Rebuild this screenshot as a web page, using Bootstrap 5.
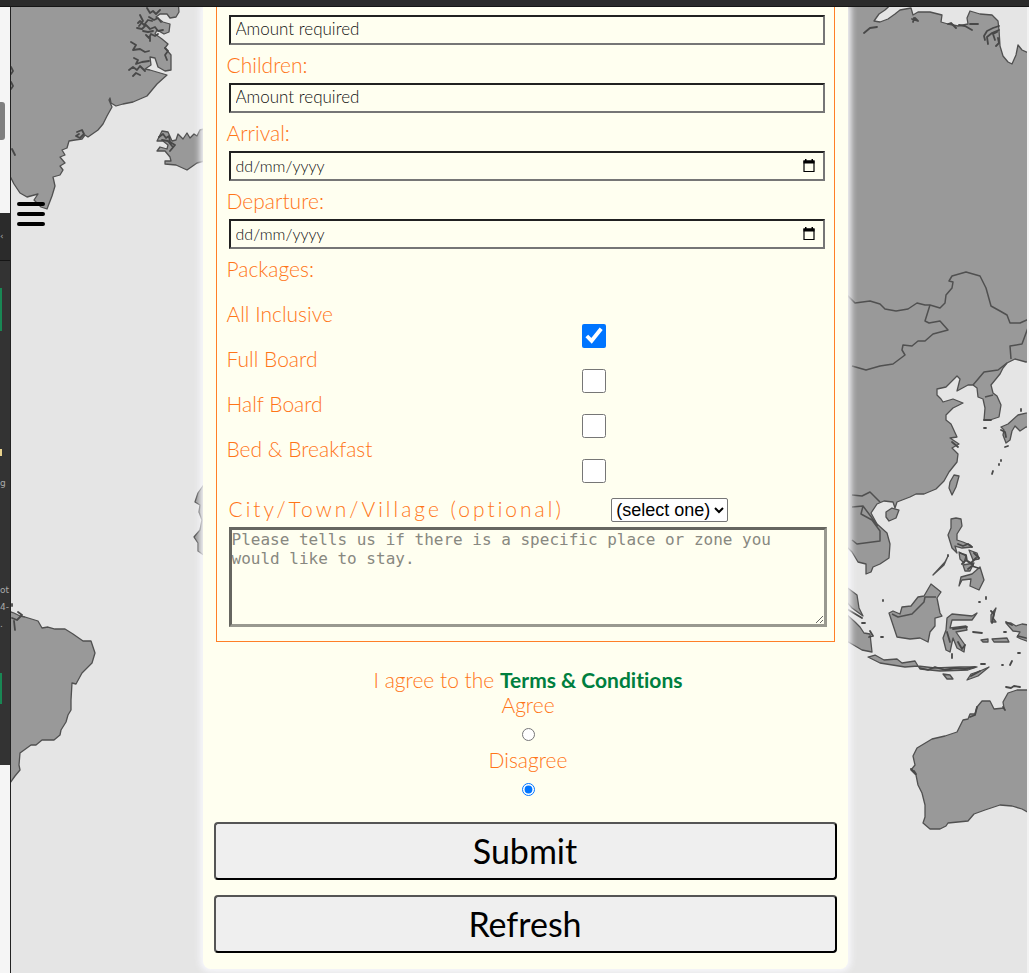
<!DOCTYPE html>
<html lang="en-GB">
<head>
<meta charset="utf-8">
<meta name="viewport" content="width=device-width, initial-scale=1">
<title>Booking request</title>
<link href="https://cdn.jsdelivr.net/npm/bootstrap@5.3.0/dist/css/bootstrap.min.css" rel="stylesheet">
<style>
  body { font-family: Lato, "Open Sans", sans-serif; font-weight: 300; font-size: 21px; line-height: 25px; font-variant-ligatures: none; color: #ff7518; background: #e5e5e5; }
  .top-strip { height: 7px; background: #2b2b2b; border-bottom: 1px solid #151515; }
  .edge { width: 11px; background: #f5f5f5; border-right: 1px solid #222; font: 9px/17px "DejaVu Sans", sans-serif; color: #aaa; }
  .edge-gap { height: 206px; }
  .edge-mark { width: 5px; height: 38px; margin-top: 95px; background: #808080; border-radius: 0 3px 3px 0; }
  .edge-panel { height: 552px; background: #333; }
  .edge-head { height: 48px; padding-top: 15px; background: #2b2b2b; border-bottom: 1px solid #151515; }
  .edge-green { width: 2px; height: 43px; margin-top: 27px; background: #198754; }
  .edge-sand { width: 2px; height: 7px; margin: 118px 0 19px; background: #e8d28c; }
  .edge-line { height: 17px; white-space: nowrap; }
  .edge-group { margin-top: 90px; }
  .edge-low { width: 2px; height: 31px; margin-top: 40px; background: #198754; }
  .stage { min-width: 0; border-right: 2px solid #f2f2f2; padding: 0 16px 4px 28px; }
  .world { position: absolute; inset: 0; width: 100%; height: 100%; }
  .menu-btn { position: absolute; left: 6px; top: 194px; width: 28px; height: 26px; }
  .sheet { width: 67%; max-width: 645px; padding: 0 11px 16px; background: #fffff0; border-radius: 0 0 8px 8px; box-shadow: 0 0 6px 3px #f8f8fc; }
  .details { margin: 0 2px; padding: 8px 7px 14px 10px; border: 1px solid #ff7f27; border-top: 0; }
  .caption { display: block; margin: 7px 0 6px; }
  .field { display: block; width: calc(100% - 4px); height: 30px; margin-left: 2px; padding: 0 5px 3px; border: 2px inset #767676; border-color: #212121 #767676 #767676 #212121; border-style: solid; background: transparent; font-size: 17px; font-weight: 300; color: #111; }
  .field::placeholder { color: #111; opacity: 1; }
  .date-field { padding-bottom: 1px; font-size: 16px; }
  .cal { position: absolute; right: 12px; top: 8px; width: 12px; height: 14px; }
  .tick { display: block; width: 24px; height: 24px; margin: -2px auto; accent-color: #0075ff; }
  .packs-title { margin-top: 7px; }
  .pack-list { margin-top: 20px; }
  .tick-cell { padding-left: 134px; }
  .place-row { margin: 17px 0 5px 2px; height: 24px; }
  .place-label { width: 64%; padding-bottom: 3px; letter-spacing: 3px; }
  .place-select { width: 117px; height: 24px; font: 18px/20px "Liberation Sans", sans-serif; color: #000; background: #fff; border: 1px solid #767676; border-radius: 2px; }
  .notes { display: block; width: calc(100% - 2px); height: 100px; margin-left: 2px; padding: 0; border: 3px solid; border-color: #666660 #999990 #999990 #666660; background: transparent; font: 16px/19px "DejaVu Sans Mono", monospace; color: #555; resize: vertical; }
  .notes::placeholder { color: #888880; opacity: 1; }
  .agree { margin-top: 25px; padding-left: 6px; }
  .agree a { color: #007f3f; font-weight: 700; }
  .pick { display: block; width: 13px; height: 13px; margin: 11px auto 6px; accent-color: #0075ff; }
  .actions { padding-top: 20px; gap: 15px; }
  .big-btn { display: block; width: 100%; height: 58px; background: #efefef; border: 2px solid; border-color: #555 #000 #000 #555; border-radius: 4px; font-size: 34px; line-height: 40px; font-weight: 400; color: #000; }
</style>
</head>
<body>
<div class="d-flex flex-column min-vh-100">
  <div class="top-strip"></div>
  <div class="d-flex flex-grow-1">
    <aside class="edge flex-shrink-0 overflow-hidden d-flex flex-column">
      <div class="edge-gap overflow-hidden"><div class="edge-mark"></div></div>
      <div class="edge-panel">
        <div class="edge-head"><div class="edge-line">‹</div></div>
        <div class="edge-green"></div>
        <div class="edge-sand"></div>
        <div class="edge-line">g</div>
        <div class="edge-group">
          <div class="edge-line">ot</div>
          <div class="edge-line">4-</div>
          <div class="edge-line">.</div>
        </div>
        <div class="edge-low"></div>
      </div>
    </aside>
    <main class="stage flex-grow-1 position-relative overflow-hidden">
      <svg class="world" viewBox="11 7 1016 966" preserveAspectRatio="xMidYMin slice" aria-hidden="true">
        <g fill="#999" stroke="#505050" stroke-width="1.3" stroke-linejoin="round">
          <!-- Greenland and Iceland -->
          <path d="M5 0H178L179 12 176 17 170 18 167 14 160 14 156 17 163 22 170 24 169 32 164 34 157 30 155 34 162 39 168 44 165 48 171 55 171 70 165 71 158 67 155 58 150 57 151 65 145 69 150 70 167 75 157 84 147 96 133 102 123 104 116 106 111 103 110 98 109 100 112 107 107 116 103 124 98 130 88 137 85 135 82 139 75 140 69 141 67 148 62 150 65 155 60 157 65 163 60 166 63 170 60 175 53 177 55 186 52 196 47 209 41 207 34 200 38 194 27 197 20 193 14 184 11 178 5 170Z"/>
          <path d="M157 141L162 131 168 132 172 141 176 140 178 134 183 139 187 133 190 138 194 134 197 136 200 130 208 128V160L197 163 187 170 176 165 165 164 165 161 171 161 170 157 165 151 157 151 160 147 167 149 168 145 163 141Z"/>
          <!-- West Africa -->
          <path d="M205 483L198 493 195 502 200 505 199 512 202 520 200 530 194 537 198 543 198 551 205 556Z"/>
          <!-- South America -->
          <path d="M5 610L14 613 20 616 25 617 38 621 42 628 48 627 55 629 65 629 73 634 83 641 91 641 95 653 92 663 82 673 76 684 72 683 71 700 71 710 68 715 66 722 61 730 60 735 54 740 42 740 36 745 31 745 20 753 19 765 20 770 15 776 5 790Z"/>
          <!-- Asia -->
          <path d="M845 0H896L885 10 879 14 874 21 880 22 888 19 895 14 900 10 911 8 913 15 918 12 930 12 942 15 941 22 948 24 958 26 968 24 967 18 970 11 980 14 992 15 998 21 999 30 1000 46 1003 56 1008 62 1012 64 1016 55 1018 45 1022 50 1035 56V360L1026 362 1015 359 1007 363 1003 368 1000 374 991 385 993 393 997 396 1001 405 999 417 990 420 984 420 985 408 983 399 978 397 977 388 973 385 968 385 957 391 960 379 957 376 946 387 937 389 937 395 941 399 943 402 953 399 963 403 953 408 946 415 946 420 951 424 957 437 950 438 959 444 952 448 958 454 957 462 949 472 944 481 936 489 924 494 916 494 910 497 897 502 895 508 893 502 884 501 877 504 871 513 877 524 887 533 890 544 889 558 880 564 873 567 871 572 866 574 866 564 858 562 852 552 845 545Z"/>
          <!-- Japan, Taiwan, Hainan -->
          <path d="M1001 427L1008 424 1018 415 1035 411V428L1026 427 1020 431 1015 426 1012 431 1010 440 1006 443 1003 435 1004 430Z"/>
          <path d="M950 482L954 475 959 476 956 487 952 495 949 488ZM886 512L892 508 899 510 896 518 889 521 886 517Z"/>
          <!-- Philippines -->
          <path d="M951 519L956 518 961 519 962 526 957 534 957 540 963 542 970 545 972 547 962 548 955 546 957 553 952 548 948 535 951 528ZM933 575L945 562 948 556 944 565ZM959 552L966 556 964 563 960 559ZM969 550L977 553 979 559 973 560ZM963 565L974 563 970 571 965 571ZM980 567L984 580 979 590 970 586 971 579 962 580 959 586 961 577 972 574Z"/>
          <!-- Borneo, Sulawesi, Sumatra, Java -->
          <path d="M889 613L893 611 900 614 902 607 911 606 918 597 924 596 931 584 941 592 937 598 940 613 942 616 935 618 935 626 930 632 928 642 920 638 910 639 897 637 892 622Z"/>
          <path d="M947 618L952 614 972 616 977 613 972 620 952 620 950 628 966 626 967 630 956 632 965 645 964 652 957 648 953 638 950 652 946 650 943 638 946 630Z"/>
          <path d="M845 586L857 595 859 608 863 616 852 608 845 600ZM845 613L855 622 860 627 864 633 870 634 872 652 862 650 845 640ZM868 657L875 655 884 660 897 659 902 663 915 661 918 666 905 667 880 663ZM918 666L935 668 960 667 977 667 968 670 940 671 920 669ZM967 680L971 674 980 671 989 667 978 676ZM943 674L950 675 953 679 947 679Z"/>
          <path d="M992 639L1007 638 1009 642 994 642ZM981 640L988 639 988 642 983 642ZM991 615L996 608 993 618 996 622 991 622ZM1006 623L1011 623 1016 626 1022 624 1035 626V644L1021 639 1017 637 1020 632 1013 631Z"/>
          <!-- Australia -->
          <path d="M1035 690L1022 690 1017 690 1008 693 1003 702 1004 708 994 709 990 701 982 701 977 707 975 714 970 714 968 719 963 720 957 732 945 736 932 739 917 748 913 756 915 765 911 770 916 775 918 785 922 793 925 805 925 817 923 823 930 829 940 829 946 826 948 823 968 821 974 814 985 810 1000 805 1012 806 1022 809 1035 816Z"/>
        </g>
        <!-- Country borders -->
        <g fill="none" stroke="#505050" stroke-width="1.5" stroke-linejoin="round">
          <path d="M845 293L855 303 870 301 880 304 885 309 896 311 908 309 917 303 925 305 930 305 940 308 945 303 946 295 952 288 953 282 949 281 952 276 966 272 980 276 986 288 991 306 1000 311 1007 315 1010 323 1020 323 1029 319"/>
          <path d="M930 305L925 321 929 323 940 321 948 330 933 334 925 341 918 341 912 346 903 345 902 350 905 355 893 364 880 366 866 370 852 366M1029 325L1022 344 1010 346 1011 359M1007 363L998 370 984 372 973 385M985 397L993 395"/>
          <path d="M852 495L862 496 870 492 880 502M852 507L863 506 861 514 872 520 880 531 880 541 857 544 852 540M863 506L878 526M892 614L898 617 912 614 924 602 925 597 936 597"/>
        </g>
        <!-- Fjords and small islands -->
        <g fill="none" stroke="#484848" stroke-width="1.8" stroke-linecap="round" stroke-linejoin="round">
          <path d="M147 8L150 13 153 11 156 14 160 10M149 17L154 20 158 18 161 22M138 23L140 21 144 25 148 20 152 21M140 15L143 21 139 26M137 28L142 29 146 25 150 29 155 27 158 31 163 30M146 35L149 38 151 34 155 36 158 34M143 31L148 32 153 31M150 36V41M131 42L136 45 133 50 140 49 145 52 149 51M134 58L138 60 136 64 142 62 149 61M129 70L133 67 137 70 140 66 145 71M133 76L136 73 140 75M165 48L168 51 165 55 167 60M77 132L82 130 84 134 80 138 76 136 79 134M159 137L163 134 166 138 169 136 170 142 175 145 170 151M162 140L168 141 172 146M11 67L13 71 11 74M11 82L13 86 11 89M12 149L15 155M14 621L15 630M12 618L17 620 22 615 18 612M12 604V606"/>
          <path d="M864 33L870 28 877 27M912 19L918 21 915 18M914 18L913 22M948 24L951 23 956 28M959 25L965 26 972 30M970 24L978 24M985 40L984 36 987 31 993 28 999 26M988 44L987 37 992 33 999 30M995 40L993 34 997 32M996 46L999 43 998 38M984 420L991 420M1001 430L1005 432 1006 437M952 442L958 447M1005 447L1008 446M1001 460V461M999 464V465M993 471L992 474M984 428H986M1021 409V411M958 544L963 546 968 544 972 547M960 553L966 555 967 561 973 565M962 564L966 560 971 563 976 558M968 569L972 566 978 568M974 553L979 558M948 555V556M883 600V601M881 637H883M947 632L950 642M953 629L967 627M958 642L962 649 965 645M973 632L982 633M991 611L994 614 992 623M986 597V599M979 602H980M1004 632H1006M920 668L928 670 935 667 945 670 955 668 965 669 975 667M971 676L980 671M981 664H985M1010 665L1012 661M1002 665H1003M1018 653H1020M862 623H865M952 654V658M847 609L862 618M870 631L873 636 869 637M1006 622L1012 625M1018 636L1026 638M1006 687L1011 688 1014 686 1020 687M977 707L975 715 970 717M1003 707L1005 710M911 769L916 774 914 771"/>
        </g>
      </svg>
      <button type="button" class="menu-btn btn p-0 border-0 d-flex" aria-label="Open menu">
        <svg width="28" height="26" viewBox="0 0 28 26"><path d="M2 3H26M2 13H26M2 23H26" stroke="#000" stroke-width="4" stroke-linecap="round"/></svg>
      </button>

      <form class="sheet mx-auto position-relative" onsubmit="return false">
        <fieldset class="details">
          <input class="field" type="text" placeholder="Amount required" aria-label="Adults">
          <label class="caption" for="children">Children:</label>
          <input class="field" id="children" type="text" placeholder="Amount required">
          <label class="caption" for="arrival">Arrival:</label>
          <div class="position-relative">
            <input class="field date-field" id="arrival" type="text" placeholder="dd/mm/yyyy">
            <svg class="cal" viewBox="0 0 12 14" aria-hidden="true"><path d="M1 2H11V12.500H1Z" fill="none" stroke="#000" stroke-width="1.200"/><path d="M.5 1.500H11.500V4.500H.5ZM2 0H3.500V2H2ZM8.500 0H10V2H8.500Z"/></svg>
          </div>
          <label class="caption" for="departure">Departure:</label>
          <div class="position-relative">
            <input class="field date-field" id="departure" type="text" placeholder="dd/mm/yyyy">
            <svg class="cal" viewBox="0 0 12 14" aria-hidden="true"><path d="M1 2H11V12.500H1Z" fill="none" stroke="#000" stroke-width="1.200"/><path d="M.5 1.500H11.500V4.500H.5ZM2 0H3.500V2H2ZM8.500 0H10V2H8.500Z"/></svg>
          </div>
          <div class="packs-title" id="packages">Packages:</div>
          <div class="pack-list" role="group" aria-labelledby="packages">
            <label class="d-block" for="p1">All Inclusive</label>
            <div class="tick-cell"><input class="tick" id="p1" type="checkbox" checked></div>
            <label class="d-block" for="p2">Full Board</label>
            <div class="tick-cell"><input class="tick" id="p2" type="checkbox"></div>
            <label class="d-block" for="p3">Half Board</label>
            <div class="tick-cell"><input class="tick" id="p3" type="checkbox"></div>
            <label class="d-block" for="p4">Bed &amp; Breakfast</label>
            <div class="tick-cell"><input class="tick" id="p4" type="checkbox"></div>
          </div>
          <div class="place-row d-flex align-items-center">
            <label class="place-label" for="kind">City/Town/Village (optional)</label>
            <select class="place-select" id="kind"><option>(select one)</option><option>City</option><option>Town</option><option>Village</option></select>
          </div>
          <textarea class="notes" aria-label="Preferred place" placeholder="Please tells us if there is a specific place or zone you would like to stay."></textarea>
        </fieldset>
        <div class="agree text-center">
          <div>I agree to the <a class="text-decoration-none" href="#terms">Terms &amp; Conditions</a></div>
          <label class="d-block" for="yes">Agree</label><input class="pick" id="yes" type="radio" name="terms">
          <label class="d-block" for="no">Disagree</label><input class="pick" id="no" type="radio" name="terms" checked>
        </div>
        <div class="actions d-grid">
          <button class="big-btn" type="submit">Submit</button>
          <button class="big-btn" type="reset">Refresh</button>
        </div>
      </form>
    </main>
  </div>
</div>
<script src="https://cdn.jsdelivr.net/npm/bootstrap@5.3.0/dist/js/bootstrap.bundle.min.js"></script>
</body>
</html>
